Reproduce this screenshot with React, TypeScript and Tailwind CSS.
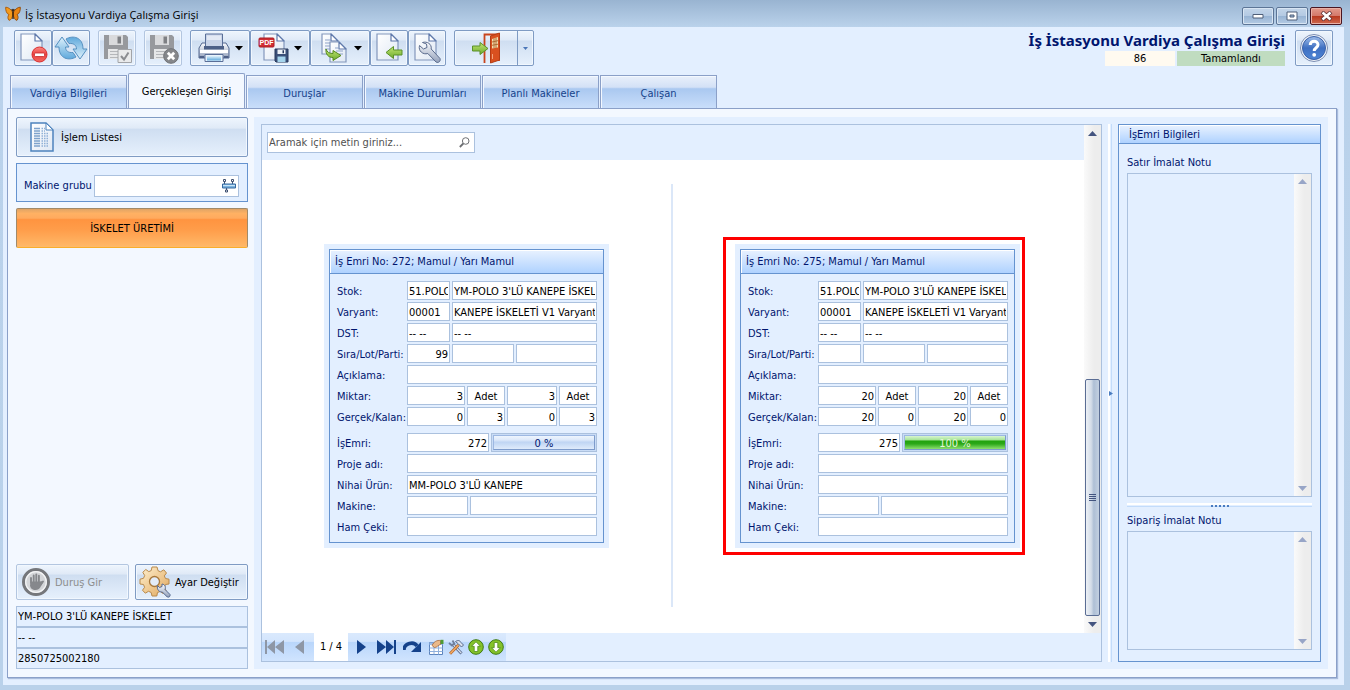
import React from 'react';
import clsx from 'clsx';

interface Cell {
  width: string;
  value?: string;
  align?: 'right' | 'center';
}

interface FieldRow {
  label: string;
  cells: Cell[];
  progress?: number;
}

interface WorkOrder {
  no: string;
  rows: FieldRow[];
}

const buildOrder = (
  no: string,
  sira: string,
  qty: string,
  done: string,
  left: string,
  progress: number,
  product: string,
): WorkOrder => ({
  no,
  rows: [
    { label: 'Stok:', cells: [{ width: 'w-[43px]', value: '51.POLO.3K' }, { width: 'flex-1', value: "YM-POLO 3'LÜ KANEPE İSKELET" }] },
    { label: 'Varyant:', cells: [{ width: 'w-[43px]', value: '00001' }, { width: 'flex-1', value: 'KANEPE İSKELETİ V1 Varyant' }] },
    { label: 'DST:', cells: [{ width: 'w-[43px]', value: '-- --' }, { width: 'flex-1', value: '-- --' }] },
    { label: 'Sıra/Lot/Parti:', cells: [{ width: 'w-[43px]', value: sira, align: 'right' }, { width: 'w-[62px]' }, { width: 'flex-1' }] },
    { label: 'Açıklama:', cells: [{ width: 'flex-1' }] },
    {
      label: 'Miktar:',
      cells: [
        { width: 'w-[58px]', value: qty, align: 'right' },
        { width: 'w-[38px]', value: 'Adet', align: 'center' },
        { width: 'flex-1', value: qty, align: 'right' },
        { width: 'w-[38px]', value: 'Adet', align: 'center' },
      ],
    },
    {
      label: 'Gerçek/Kalan:',
      cells: [
        { width: 'w-[58px]', value: done, align: 'right' },
        { width: 'w-[38px]', value: left, align: 'right' },
        { width: 'flex-1', value: done, align: 'right' },
        { width: 'w-[38px]', value: left, align: 'right' },
      ],
    },
    { label: 'İşEmri:', cells: [{ width: 'w-[82px]', value: no, align: 'right' }], progress },
    { label: 'Proje adı:', cells: [{ width: 'flex-1' }] },
    { label: 'Nihai Ürün:', cells: [{ width: 'flex-1', value: product }] },
    { label: 'Makine:', cells: [{ width: 'w-[61px]' }, { width: 'flex-1' }] },
    { label: 'Ham Çeki:', cells: [{ width: 'flex-1' }] },
  ],
});

const orders: WorkOrder[] = [
  buildOrder('272', '99', '3', '0', '3', 0, "MM-POLO 3'LÜ KANEPE"),
  buildOrder('275', '', '20', '20', '0', 100, ''),
];

const tabs = ['Vardiya Bilgileri', 'Gerçekleşen Girişi', 'Duruşlar', 'Makine Durumları', 'Planlı Makineler', 'Çalışan'];

const buttonSkin =
  'rounded-[2px] border bg-[linear-gradient(#eef5fd_0%,#e0eaf7_26%,#cfdef1_30%,#d9e6f6_60%,#e6f0fc_100%)] shadow-[inset_0_0_0_1px_#f1f7fe]';

/* ---------- icons ---------- */

const PagePath = ({ x = 0, y = 0, w = 21, h = 26 }: { x?: number; y?: number; w?: number; h?: number }) => (
  <g transform={`translate(${x} ${y})`}>
    <path d={`M0 0H${w - 7}L${w} 7V${h}H0Z`} fill="url(#paper)" stroke="#8397bc" strokeWidth="1.2" />
    <path d={`M${w - 7} 0V7H${w}Z`} fill="#fff" stroke="#5f79ab" strokeWidth="1.2" strokeLinejoin="round" />
  </g>
);

const Defs = () => (
  <svg className="absolute size-0" aria-hidden="true">
    <defs>
      <linearGradient id="paper" x1="0" y1="0" x2="1" y2="1">
        <stop offset="0" stopColor="#ffffff" />
        <stop offset="1" stopColor="#dfe8f4" />
      </linearGradient>
      <linearGradient id="red" x1="0" y1="0" x2="0" y2="1">
        <stop offset="0" stopColor="#fb8a85" />
        <stop offset="0.5" stopColor="#ea3f3d" />
        <stop offset="1" stopColor="#f26a62" />
      </linearGradient>
      <linearGradient id="sky" x1="0" y1="0" x2="0" y2="1">
        <stop offset="0" stopColor="#dff1fb" />
        <stop offset="1" stopColor="#5fa9dc" />
      </linearGradient>
      <linearGradient id="green" x1="0" y1="0" x2="0" y2="1">
        <stop offset="0" stopColor="#c3e673" />
        <stop offset="1" stopColor="#6cab2c" />
      </linearGradient>
      <linearGradient id="steel" x1="0" y1="0" x2="0" y2="1">
        <stop offset="0" stopColor="#fbfcfe" />
        <stop offset="1" stopColor="#93a1bb" />
      </linearGradient>
      <linearGradient id="gold" x1="0" y1="0" x2="1" y2="1">
        <stop offset="0" stopColor="#fff0cf" />
        <stop offset="1" stopColor="#e0a75c" />
      </linearGradient>
      <linearGradient id="help" x1="0" y1="0" x2="0" y2="1">
        <stop offset="0" stopColor="#9fbdea" />
        <stop offset="0.5" stopColor="#3f6fc1" />
        <stop offset="1" stopColor="#4f86d6" />
      </linearGradient>
    </defs>
  </svg>
);

const Butterfly = () => (
  <svg width="16" height="16" viewBox="0 0 16 16">
    <path d="M7.500 6C6 3 2.500 1 .7 1.200 .4 4 1.500 7.800 4 8.600 2.500 10 2.600 13 4 14.300 6 14.300 7.400 11.500 7.700 9Z" fill="#f39a1d" stroke="#a85708" strokeWidth=".9" />
    <path d="M8.500 6C10 3 13.500 1 15.300 1.200 15.600 4 14.500 7.800 12 8.600 13.500 10 13.400 13 12 14.300 10 14.300 8.600 11.500 8.300 9Z" fill="#e98412" stroke="#8f4a08" strokeWidth=".9" />
    <path d="M8 4.500V13M8 5 6.800 3M8 5 9.200 3" stroke="#33200c" strokeWidth="1.300" />
  </svg>
);

const DeletePageIcon = () => (
  <svg width="32" height="32" viewBox="0 0 32 32">
    <PagePath x={4} y={2} />
    <circle cx="22.500" cy="22.500" r="7.500" fill="url(#red)" stroke="#d92f31" />
    <rect x="17.500" y="21" width="10" height="3.500" rx="1" fill="#fff" stroke="#c5272b" strokeWidth=".8" />
  </svg>
);

const RefreshIcon = () => {
  const arrow = 'M1 15 8 5 15 15H11.500C11.500 18.500 14 21 19 20.500L22 25C15 29 5 27 5 15Z';
  return (
    <svg width="34" height="32" viewBox="0 0 34 32">
      <g fill="url(#sky)" stroke="#5590c0" strokeWidth="1" strokeLinejoin="round">
        <path d={arrow} />
        <path d={arrow} transform="rotate(180 17 16)" />
      </g>
    </svg>
  );
};

const GreyFloppy = ({ mark }: { mark: 'check' | 'cross' }) => (
  <svg width="32" height="32" viewBox="0 0 32 32">
    <path d="M3 3H25L27 5V27H3Z" fill="#97999d" />
    <path d="M8 3H22V13H8Z" fill="#d9dadc" />
    <path d="M16.500 4.500H20V11.500H16.500Z" fill="#7e8084" />
    <path d="M7 17H23V27H7Z" fill="#e6e7e8" />
    <path d="M9 19.500H21M9 22.500H21M9 25.500H21" stroke="#b5b7ba" />
    {mark === 'check' ? (
      <>
        <path d="M17 17.500H30.500V30.500H17Z" fill="#e9eaeb" stroke="#a2a4a8" />
        <path d="M20 24 23 27.500 27.500 20.500" fill="none" stroke="#8b8d91" strokeWidth="2" />
      </>
    ) : (
      <>
        <circle cx="24" cy="24" r="7.300" fill="#85878b" stroke="#717377" />
        <path d="M20.800 20.800 27.200 27.200M27.200 20.800 20.800 27.200" stroke="#fff" strokeWidth="2.800" />
      </>
    )}
  </svg>
);

const PrinterIcon = () => (
  <svg width="34" height="32" viewBox="0 0 34 32">
    <path d="M5 11H29L32 16V26H2V16Z" fill="url(#steel)" stroke="#52678f" strokeLinejoin="round" />
    <path d="M8.500 2H25.500V14.500H8.500Z" fill="#c9d4e8" stroke="#5a6f98" />
    <path d="M10 3.500H24V8H10Z" fill="#e3e9f4" />
    <path d="M7 14H27V17.500H7Z" fill="#4d6087" />
    <path d="M3 19.500H31" stroke="#fff" strokeWidth="3" />
    <path d="M2.500 24H7V26H2.500ZM27 24H31.500V26H27Z" fill="#4d6087" />
    <path d="M8 22.500H26V29.500H8Z" fill="#e9f3fb" stroke="#5a6f98" />
    <path d="M10 24H24V28.500H10Z" fill="url(#sky)" />
  </svg>
);

const PdfSaveIcon = () => (
  <svg width="32" height="32" viewBox="0 0 32 32">
    <PagePath x={6} y={2} w={20} />
    <rect x="1" y="6" width="15" height="9" rx="1" fill="#d12d33" stroke="#a81e25" />
    <text x="8.500" y="13.300" textAnchor="middle" fontSize="7" fontWeight="bold" fill="#fff" fontFamily="Liberation Sans, sans-serif">
      PDF
    </text>
    <path d="M17 17H30V30H18L17 29Z" fill="#3a4f78" stroke="#26385c" />
    <path d="M19.500 17.500H27.500V22H19.500Z" fill="#eef2f7" />
    <path d="M24.500 18.300H26V21.200H24.500Z" fill="#26385c" />
    <path d="M19.500 24.500H27.500V30H19.500Z" fill="#a5d4ec" />
  </svg>
);

const CopyPagesIcon = () => (
  <svg width="32" height="32" viewBox="0 0 32 32">
    <PagePath x={4} y={2} w={16} h={20} />
    <path d="M7 8H13M7 11H12M7 14H12M7 17H12" stroke="#8fa3c9" />
    <PagePath x={12} y={10} w={16} h={20} />
    <path d="M17 16H21M18 19H25M21 22H25" stroke="#8fa3c9" />
    <path d="M8 17C9 20 11 21.500 15 21.500V18.500L23 23.500 15 28.500V25.500C10 25.500 7.500 22 8 17Z" fill="url(#green)" stroke="#55891f" strokeLinejoin="round" />
  </svg>
);

const ImportPageIcon = () => (
  <svg width="32" height="32" viewBox="0 0 32 32">
    <PagePath x={4} y={2} />
    <path d="M13 20.500 20.500 14.500V18H29V23H20.500V26.500Z" fill="url(#green)" stroke="#5b9128" strokeLinejoin="round" />
  </svg>
);

const WrenchPageIcon = () => (
  <svg width="32" height="32" viewBox="0 0 32 32">
    <PagePath x={4} y={2} />
    <path
      d="M8.500 13.500 12.500 17 16 15.500 15.500 12 11.500 10.500C16 9 21 12 20.200 17L29 26.500C30 29 27.500 31.500 25 30L16.800 21.500C12 23 7 19 8.500 13.500Z"
      fill="url(#steel)"
      stroke="#5a6b8d"
      strokeLinejoin="round"
    />
  </svg>
);

const DoorIcon = () => (
  <svg width="32" height="32" viewBox="0 0 32 32">
    <path d="M14.500 31V2.500H29V29" fill="none" stroke="#c9451d" strokeWidth="1.800" />
    <path d="M20.500 4 29.500 1V28L20.500 31Z" fill="#d9501f" stroke="#b43c14" />
    <path d="M22 7 28 5V15.500L22 16.500Z" fill="#f6dcae" />
    <path d="M24 6.300V16.300M26 5.600V16M22 10 28 8.700M22 13.300 28 12.200" stroke="#a7632d" strokeWidth=".9" />
    <path d="M22.500 22V27" stroke="#f2a37a" />
    <path d="M2.500 14H10V10.500L18 16.500 10 22.500V19H2.500Z" fill="url(#green)" stroke="#5b9128" strokeLinejoin="round" />
  </svg>
);

const HelpIcon = () => (
  <svg width="30" height="30" viewBox="0 0 30 30">
    <circle cx="15" cy="15" r="13.500" fill="#f2f5fa" stroke="#7b8db2" />
    <circle cx="15" cy="15" r="11.500" fill="url(#help)" stroke="#3b61a8" />
    <path d="M11.200 12C11.200 7 19 7 19 11.800 19 14.800 15.200 14.800 15.200 18" fill="none" stroke="#fff" strokeWidth="3" />
    <circle cx="15.200" cy="21.800" r="1.900" fill="#fff" />
  </svg>
);

const ListPageIcon = () => (
  <svg width="26" height="32" viewBox="0 0 26 32">
    <path d="M2 2H17L24 9V30H2Z" fill="url(#paper)" stroke="#4d83bd" strokeWidth="1.500" />
    <path d="M17 2V9H24Z" fill="#fff" stroke="#4d83bd" strokeLinejoin="round" />
    <path d="M5 7.500H11M5 10H11M5 12.500H11M5 15H11M5 17.500H11M5 20H11M5 22.500H11M5 25H11" stroke="#7ea2cc" strokeWidth="1.300" />
    <path d="M12.500 7.500H16M12.500 10H16M12.500 12.500H20M12.500 15H20M12.500 17.500H20M12.500 20H20M12.500 22.500H20M12.500 25H20" stroke="#8fb0d6" strokeWidth="1.300" strokeDasharray="1.500 1" />
  </svg>
);

const MachineIcon = () => (
  <svg width="14" height="14" viewBox="0 0 14 14" className="shrink-0">
    <path d="M2.500 3V6M10.500 3V6M4.500 9V12" stroke="#3d4f70" />
    <path d="M1.500 .5H3.500V2.500H1.500ZM9.500 .5H11.500V2.500H9.500ZM3.500 11H5.500V13H3.500Z" fill="#fff" stroke="#3d4f70" />
    <path d="M.5 5H13.500V9H.5Z" fill="#7db4e0" stroke="#37699f" />
    <path d="M1 6.500H13" stroke="#c8e4f6" />
  </svg>
);

const HandIcon = () => (
  <svg width="30" height="30" viewBox="0 0 30 30">
    <circle cx="15" cy="15" r="12.500" fill="#d4d6d9" stroke="#75777b" strokeWidth="3" />
    <circle cx="15" cy="15" r="10.300" fill="none" stroke="#f3f4f5" strokeWidth="1.200" />
    <path
      d="M10 14.500H18.500L22 14C22.500 15.500 21 16.500 20 19 19 21.500 17 23 14.500 23 11.500 23 9 21 9 18Z"
      fill="#86888c"
    />
    <path d="M10 16V11M12.700 15V8.500M15.300 15V7.500M17.900 15.500V8.800M19.500 18 22 14.500" stroke="#86888c" strokeWidth="1.900" strokeLinecap="round" />
  </svg>
);

const GearIcon = () => (
  <svg width="32" height="32" viewBox="0 0 32 32">
    <g transform="translate(15.500 15.500)">
      <path
        d="M-2.500-14.500H2.500L3.500-10.800 6-9.700 9.300-11.700 12-8.500 9.800-5.600 11-3 14.500-2.300V2.500L11 3 9.800 5.800 11.700 9.200 8.500 12 5.800 9.900 3 11 2.300 14.500H-2.500L-3.300 11-6 9.800-9.200 11.700-12 8.700-9.900 5.800-11 3-14.500 2.500V-2.300L-11-3.200-9.800-6-11.700-9.200-8.700-12-5.700-9.900-3.300-10.900Z"
        fill="url(#gold)"
        stroke="#b98a4c"
        strokeLinejoin="round"
      />
      <circle r="5" fill="#e3ecf8" stroke="#a9783a" strokeWidth="1.300" />
    </g>
    <path
      d="M18.500 19.500 20.500 21.500 23 20.500 23 18C26 18.500 27 21 26 23.500L31 28.500C31.500 30.500 30 31.500 28.300 31L23.300 26C20.500 26.500 17.500 23.500 18.500 19.500Z"
      fill="url(#steel)"
      stroke="#55688f"
      strokeLinejoin="round"
    />
  </svg>
);

const SearchIcon = () => (
  <svg width="11" height="11" viewBox="0 0 11 11">
    <circle cx="6.700" cy="4" r="3.300" fill="none" stroke="#6d6f73" />
    <path d="M4.300 6.500 .8 10" stroke="#6d6f73" strokeWidth="1.800" />
  </svg>
);

const GridHandIcon = () => (
  <svg width="16" height="16" viewBox="0 0 16 16">
    <path d="M1.500 3.500H14.500V15.500H1.500Z" fill="#fff" stroke="#5b83bd" />
    <path d="M1.500 3.500H14.500V6H1.500Z" fill="#9dbde8" />
    <path d="M1.500 9H14.500M1.500 12.500H14.500M6 6V15.500M10.500 6V15.500" stroke="#8fb0dd" />
    <path d="M4 6.500C6 2.500 9 1 12.500 1.500V5.500C10 6 9 8.500 6.500 8.500Z" fill="#eab98a" stroke="#a8683a" strokeWidth=".8" />
    <path d="M12.500 .8H15.500V5H12.500Z" fill="#4f9a33" />
  </svg>
);

const ToolsIcon = () => (
  <svg width="16" height="16" viewBox="0 0 16 16">
    <path d="M4.500 5 13.500 14.500" stroke="#5d6e90" strokeWidth="3" />
    <path d="M4.500 5 13.300 14.200" stroke="#dfe6f1" strokeWidth="1.200" />
    <path d="M1 4 4 6.500 6.300 4.500 4.500 1.500" fill="none" stroke="#6f7f9d" strokeWidth="1.800" />
    <path d="M10.500 6 2 14.800" stroke="#b8662a" strokeWidth="2.800" />
    <path d="M10.500 6 2.300 14.500" stroke="#f2b06a" strokeWidth="1.200" />
    <path d="M7.500 2.500C10 .8 12 1.500 13 3.500L15.500 6 13.500 8 10.500 5Z" fill="#dbe2ee" stroke="#59698a" />
  </svg>
);

const CircleArrow = ({ down }: { down?: boolean }) => (
  <svg width="16" height="16" viewBox="0 0 16 16" className={down ? 'rotate-180' : ''}>
    <circle cx="8" cy="8" r="7.300" fill="#84c229" stroke="#3f7a12" />
    <path d="M8 2.800 12.500 7.300H9.800V12.500H6.200V7.300H3.500Z" fill="#fff" stroke="#4f8a1a" strokeWidth=".8" />
  </svg>
);

const Caret = ({ className, up }: { className?: string; up?: boolean }) => (
  <svg width="9" height="5" viewBox="0 0 9 5" className={className}>
    <path d={up ? 'M0 5 4.500 0 9 5Z' : 'M0 0H9L4.500 5Z'} fill="currentColor" />
  </svg>
);

/* ---------- controls ---------- */

const ToolButton: React.FC<{ label: string; disabled?: boolean; dropdown?: boolean; children: React.ReactNode }> = ({
  label,
  disabled,
  dropdown,
  children,
}) => (
  <button
    aria-label={label}
    disabled={disabled}
    className={clsx(
      'flex h-9 items-center justify-center',
      dropdown ? 'w-[60px] gap-1' : 'w-[38px]',
      buttonSkin,
      disabled ? 'border-[#b3c6e0]' : 'border-[#7f9bc3]',
    )}
  >
    {children}
    {dropdown && (
      <svg width="8" height="5" viewBox="0 0 8 5">
        <path d="M0 0H8L4 4.500Z" fill="#000" />
      </svg>
    )}
  </button>
);

const WindowButton: React.FC<{ label: string; close?: boolean; children: React.ReactNode }> = ({ label, close, children }) => (
  <button
    aria-label={label}
    className={clsx(
      'flex h-[18px] w-8 items-center justify-center rounded-[2px] border',
      close
        ? 'border-[#4a1520] bg-[linear-gradient(#e39a8c_0%,#d4796a_48%,#b8391f_52%,#cf6a50_100%)] shadow-[inset_0_0_0_1px_#e9b0a6]'
        : 'border-[#5c7596] bg-[linear-gradient(#c3d5e9_0%,#b4cae3_48%,#98b4d4_52%,#b4cbe4_100%)] shadow-[inset_0_0_0_1px_#d8e5f3]',
    )}
  >
    {children}
  </button>
);

const OrderCard: React.FC<{ order: WorkOrder }> = ({ order }) => (
  <div className="w-[285px] bg-[#e3efff] p-[5px]">
    <section className="border border-[#6593cf]">
      <h3 className="flex h-6 items-center border-b border-[#6593cf] bg-[linear-gradient(#e9f2ff,#afd2ff)] pt-[2px] pl-[5px] shadow-[inset_1px_1px_0_#fff]">
        İş Emri No: {order.no}; Mamul / Yarı Mamul
      </h3>
      <div className="flex flex-col gap-[2px] pt-[7px] pr-[6px] pb-[6px] pl-[7px]">
        {order.rows.map((row, r) => (
          <div key={row.label} className={clsx('flex gap-[2px]', row.progress !== undefined && 'mt-[5px]')}>
            <label htmlFor={`f${order.no}-${r}-0`} className="h-[19px] w-[68px] leading-[21px] whitespace-nowrap">
              {row.label}
            </label>
            {row.cells.map((cell, c) => (
              <input
                key={c}
                id={`f${order.no}-${r}-${c}`}
                aria-label={c > 0 ? `${row.label} ${c + 1}` : undefined}
                readOnly
                value={cell.value ?? ''}
                className={clsx(
                  'h-[19px] min-w-0 border border-[#abc1de] bg-white px-px pt-px text-black',
                  cell.width,
                  cell.align === 'right' && 'text-right',
                  cell.align === 'center' && 'text-center',
                )}
              />
            ))}
            {row.progress !== undefined && (
              <div className="h-[19px] flex-1 border border-[#abc1de] bg-[#c9dcf6] p-px">
                <div
                  role="progressbar"
                  aria-label={row.label}
                  aria-valuenow={row.progress}
                  className={clsx(
                    'h-full border border-[#9db8e2] border-r-[#7d9bcb] border-b-[#7d9bcb] text-center leading-[15px]',
                    row.progress === 100
                      ? 'bg-[linear-gradient(#d8f5d0_0%,#a9e59a_28%,#22a30e_40%,#2ba818_60%,#8ee070_100%)] text-[#e6f6d8]'
                      : 'bg-[linear-gradient(#eef5fe_0%,#dde9fa_30%,#bfd5f3_48%,#dfebfb_100%)]',
                  )}
                >
                  {row.progress} %
                </div>
              </div>
            )}
          </div>
        ))}
      </div>
    </section>
  </div>
);

const NoteBox: React.FC<{ id: string; label: string; className?: string }> = ({ id, label, className }) => (
  <div className={clsx('flex flex-col', className)}>
    <label htmlFor={id} className="h-[19px] leading-[17px]">
      {label}
    </label>
    <div className="flex flex-1 border border-[#abc1de]">
      <textarea id={id} className="min-w-0 flex-1 resize-none bg-transparent" />
      <div className="flex w-[17px] flex-col items-center justify-between bg-[linear-gradient(90deg,#fafafa,#ededed_60%)] py-[5px] text-[#97a5c7]">
        <Caret up />
        <Caret />
      </div>
    </div>
  </div>
);

export default function App() {
  return (
    <div className="flex min-h-screen flex-col bg-[linear-gradient(#99b4d1_0px,#bad2eb_27px,#b9d1ea_100%)] font-['DejaVu_Sans_Condensed','Noto_Sans',sans-serif] text-[11px] text-[#00156e]">
      <Defs />

      <header className="flex h-[27px] items-center pr-2 pl-[5px]">
        <Butterfly />
        <h1 className="ml-1 flex-1 pt-1 font-['Open_Sans','Noto_Sans',sans-serif] text-[11px] text-black">İş İstasyonu Vardiya Çalışma Girişi</h1>
        <div className="flex gap-[2px] pt-1">
          <WindowButton label="Simge durumuna küçült">
            <svg width="12" height="6"><path d="M1 1.500H11V5H1Z" fill="#fff" stroke="#4f5f78" /></svg>
          </WindowButton>
          <WindowButton label="Ekranı kapla">
            <svg width="12" height="10"><path d="M1 1H11V9H1Z" fill="#fff" stroke="#4f5f78" /><path d="M4 4H8V6H4Z" fill="#9db8d7" stroke="#4f5f78" /></svg>
          </WindowButton>
          <WindowButton label="Kapat" close>
            <svg width="13" height="10" viewBox="0 0 13 10">
              <path d="M2 1 11 9M11 1 2 9" stroke="#5a3035" strokeWidth="4" />
              <path d="M2.500 1.500 10.500 8.500M10.500 1.500 2.500 8.500" stroke="#fff" strokeWidth="2.500" />
            </svg>
          </WindowButton>
        </div>
      </header>

      <div className="mr-[6px] mb-[5px] ml-[3px] flex flex-1 flex-col bg-[#e3efff]">
        {/* Toolbar */}
        <div className="flex h-[46px] items-start pt-[3px] pr-[11px] pl-[11px]">
          <ToolButton label="Sil"><DeletePageIcon /></ToolButton>
          <ToolButton label="Yenile"><RefreshIcon /></ToolButton>
          <div className="ml-2"><ToolButton label="Kaydet" disabled><GreyFloppy mark="check" /></ToolButton></div>
          <div className="ml-2"><ToolButton label="Kaydet ve kapat" disabled><GreyFloppy mark="cross" /></ToolButton></div>
          <div className="ml-2"><ToolButton label="Yazdır" dropdown><PrinterIcon /></ToolButton></div>
          <ToolButton label="PDF kaydet" dropdown><PdfSaveIcon /></ToolButton>
          <ToolButton label="Kopyala" dropdown><CopyPagesIcon /></ToolButton>
          <ToolButton label="İçe al"><ImportPageIcon /></ToolButton>
          <ToolButton label="Ayarlar"><WrenchPageIcon /></ToolButton>
          <div className={clsx('ml-2 flex h-9 w-20 border-[#7f9bc3]', buttonSkin)}>
            <button aria-label="Çıkış" className="flex flex-1 items-center justify-center"><DoorIcon /></button>
            <button aria-label="Çıkış seçenekleri" className="flex w-4 items-center justify-center border-l border-[#7f9bc3] text-[#4a76b8]">
              <svg width="5" height="3"><path d="M0 0H5L2.500 3Z" fill="currentColor" /></svg>
            </button>
          </div>

          <div className="ml-auto flex flex-col items-end">
            <h2 className="h-[21px] font-['Noto_Sans',sans-serif] text-[15px] leading-[20px] font-bold">İş İstasyonu Vardiya Çalışma Girişi</h2>
            <div className="flex h-[15px] gap-[2px] text-center leading-4 text-black">
              <span className="w-[70px] bg-[#fffaf0]">86</span>
              <span className="w-[108px] bg-[#c0dcc0]">Tamamlandı</span>
            </div>
          </div>
          <button aria-label="Yardım" className={clsx('ml-[10px] flex h-9 w-[38px] items-center justify-center border-[#7f9bc3]', buttonSkin)}>
            <HelpIcon />
          </button>
        </div>

        {/* Tabs */}
        <div role="tablist" className="-mb-px flex items-end gap-px pl-[7px]">
          {tabs.map((tab, i) => (
            <button
              key={tab}
              role="tab"
              aria-selected={i === 1}
              className={clsx(
                'w-[117px] border border-[#8ba0c8]',
                i === 1
                  ? 'h-9 rounded-t-[2px] border-b-0 bg-[#f3f8ff] pt-[2px] text-black'
                  : 'h-[34px] bg-[linear-gradient(#e9f0fb_0%,#d3e1f6_35%,#aac8f0_40%,#c9defa_100%)] pt-1 text-[#15428b] shadow-[inset_1px_1px_0_#f3f8ff]',
              )}
            >
              {tab}
            </button>
          ))}
        </div>

        <main className="mr-[7px] mb-[7px] ml-1 flex flex-1 gap-[6px] border border-[#8ba0c8] bg-[#f3f8ff] p-2 shadow-[1px_1px_1px_#a9bcdc]">
          {/* Left column */}
          <aside className="flex w-[232px] flex-col gap-[6px]">
            <button className={clsx('flex h-10 items-center gap-[6px] border-[#7f9bc3] pl-3 text-black', buttonSkin)}>
              <ListPageIcon />
              <span className="pt-[2px]">İşlem Listesi</span>
            </button>
            <div className="flex h-[39px] items-center border border-[#6593cf] bg-[#e3efff] pt-[6px] pr-2 pl-[7px]">
              <label htmlFor="machine-group" className="w-[70px] shrink-0 pt-[2px] whitespace-nowrap">Makine grubu</label>
              <div className="flex h-[22px] min-w-0 flex-1 items-center border border-[#abc1de] bg-white pr-[2px]">
                <input id="machine-group" className="min-w-0 flex-1" />
                <MachineIcon />
              </div>
            </div>
            <button className="h-10 rounded-[2px] border border-[#a08a6a] border-b-[#f9ae2b] bg-[linear-gradient(#e0a465_0%,#ffb163_12%,#ffaa5e_24%,#ff9440_28%,#ff9d4a_55%,#ffb969_100%)] pt-[2px] text-black">
              İSKELET ÜRETİMİ
            </button>

            <div className="mt-auto grid grid-cols-2 gap-[6px]">
              <button disabled className={clsx('flex h-9 items-center gap-1 border-[#b3c6e0] pl-1 text-[#8d8d8d]', buttonSkin)}>
                <HandIcon />
                <span className="pt-[2px]">Duruş Gir</span>
              </button>
              <button className={clsx('flex h-9 items-center gap-1 border-[#7f9bc3] pl-[3px] whitespace-nowrap text-black', buttonSkin)}>
                <GearIcon />
                <span className="pt-[2px]">Ayar Değiştir</span>
              </button>
            </div>
            <div className="flex flex-col text-black">
              {["YM-POLO 3'LÜ KANEPE İSKELET", '-- --', '2850725002180'].map((text) => (
                <input key={text} aria-label={text} readOnly value={text} className="h-[21px] border border-[#abc1de] bg-[#e3efff] px-px" />
              ))}
            </div>
          </aside>

          <div className="flex min-w-0 flex-1 bg-[#e3efff] p-[7px]">
            {/* Work order view */}
            <section className="flex min-w-0 flex-1 flex-col border border-[#abc1de]">
              <div className="flex flex-1">
                <div className="flex min-w-0 flex-1 flex-col">
                  <div className="h-[35px] px-[5px] pt-[7px]">
                    <div className="flex h-[21px] w-[208px] items-center border border-[#abc1de] bg-white pr-1 pl-px">
                      <input
                        aria-label="Ara"
                        placeholder="Aramak için metin giriniz..."
                        className="min-w-0 flex-1 pt-px placeholder:text-[#505050] placeholder:opacity-100"
                      />
                      <SearchIcon />
                    </div>
                  </div>
                  <div className="flex flex-1 bg-white pr-[2px] pb-px">
                    <div className="flex flex-1 items-center justify-center">
                      <OrderCard order={orders[0]} />
                    </div>
                    <div className="mt-6 mb-[25px] w-[2px] bg-[#dbe7f8]" />
                    <div className="flex flex-1 items-center justify-center">
                      <div className="relative">
                        <OrderCard order={orders[1]} />
                        {/* Highlight frame */}
                        <div className="pointer-events-none absolute -top-[7px] -right-[5px] -bottom-[7px] -left-3 border-3 border-[#fe0000]" />
                      </div>
                    </div>
                  </div>
                </div>
                <div className="flex w-[17px] flex-col items-center bg-[linear-gradient(90deg,#fafafa,#ededed_60%)] text-[#43547f]">
                  <Caret up className="my-[6px]" />
                  <div className="flex-[237]" />
                  <div className="flex w-[15px] flex-[236] flex-col items-center justify-center gap-px rounded-[2px] border border-[#5a6d94] bg-[linear-gradient(90deg,#edf1f6,#d3dce8_40%,#aebfd5_60%,#c3d0e1)]">
                    {[0, 1, 2, 3].map((n) => (
                      <span key={n} className="h-px w-[7px] bg-[#43547f]" />
                    ))}
                  </div>
                  <Caret className="my-[6px]" />
                </div>
              </div>

              {/* Record navigator */}
              <nav className="flex h-7 w-fit items-center bg-[linear-gradient(#dae9fd_0%,#d3e5fd_30%,#b9d6fb_33%,#d0e4fe_100%)]">
                <button aria-label="İlk kayıt" className="ml-[3px] text-[#8e97a6]">
                  <svg width="19" height="14"><path d="M0 0H2V14H0ZM2 7 10 0V14ZM10 7 19 0V14Z" fill="currentColor" /></svg>
                </button>
                <button aria-label="Önceki kayıt" className="mr-[10px] ml-[11px] text-[#8e97a6]">
                  <svg width="9" height="14"><path d="M0 7 9 0V14Z" fill="currentColor" /></svg>
                </button>
                <span className="w-[34px] self-stretch bg-white text-center leading-7 text-black">1 / 4</span>
                <button aria-label="Sonraki kayıt" className="ml-[9px] text-[#15428b]">
                  <svg width="9" height="14"><path d="M0 0 9 7 0 14Z" fill="currentColor" /></svg>
                </button>
                <button aria-label="Son kayıt" className="ml-[11px] text-[#15428b]">
                  <svg width="19" height="14"><path d="M0 0 9 7 0 14ZM9 0 17 7 9 14ZM17 0H19V14H17Z" fill="currentColor" /></svg>
                </button>
                <button aria-label="Git" className="mr-[6px] ml-[7px] text-[#15428b]">
                  <svg width="19" height="14"><path d="M1 10C1 3 11 1 14 6" fill="none" stroke="currentColor" strokeWidth="3.500" /><path d="M18 2V12H8Z" fill="currentColor" /></svg>
                </button>
                <div className="flex gap-1 pr-[2px]">
                  <button aria-label="Görünüm"><GridHandIcon /></button>
                  <button aria-label="Araçlar"><ToolsIcon /></button>
                  <button aria-label="Yukarı"><CircleArrow /></button>
                  <button aria-label="Aşağı"><CircleArrow down /></button>
                </div>
              </nav>
            </section>

            <div className="mx-[6px] flex w-1 items-center border-r border-l-2 border-r-[#c3dcfb] border-l-white">
              <svg width="3" height="5" className="shrink-0 overflow-visible"><path d="M-1 0 3 2.500-1 5Z" fill="#4a7cc0" /></svg>
            </div>

            {/* Notes */}
            <section className="flex w-[203px] flex-col border border-[#6593cf]">
              <h3 className="h-[19px] border-b border-[#6593cf] bg-[linear-gradient(#e9f2ff,#afd2ff)] pl-[10px] leading-[19px] shadow-[inset_1px_1px_0_#fff]">
                İşEmri Bilgileri
              </h3>
              <div className="flex flex-1 flex-col px-2 pt-[10px] pb-[11px]">
                <NoteBox id="line-note" label="Satır İmalat Notu" className="flex-[343]" />
                <div className="mt-[6px] mb-[5px] flex h-1 items-start justify-center gap-[2px] border-t-2 border-b border-t-white border-b-[#c3dcfb]">
                  {[0, 1, 2, 3, 4].map((n) => (
                    <span key={n} className="size-[2px] bg-[#4a7cc0]" />
                  ))}
                </div>
                <NoteBox id="order-note" label="Sipariş İmalat Notu" className="flex-[138]" />
              </div>
            </section>
          </div>
        </main>
      </div>
    </div>
  );
}
